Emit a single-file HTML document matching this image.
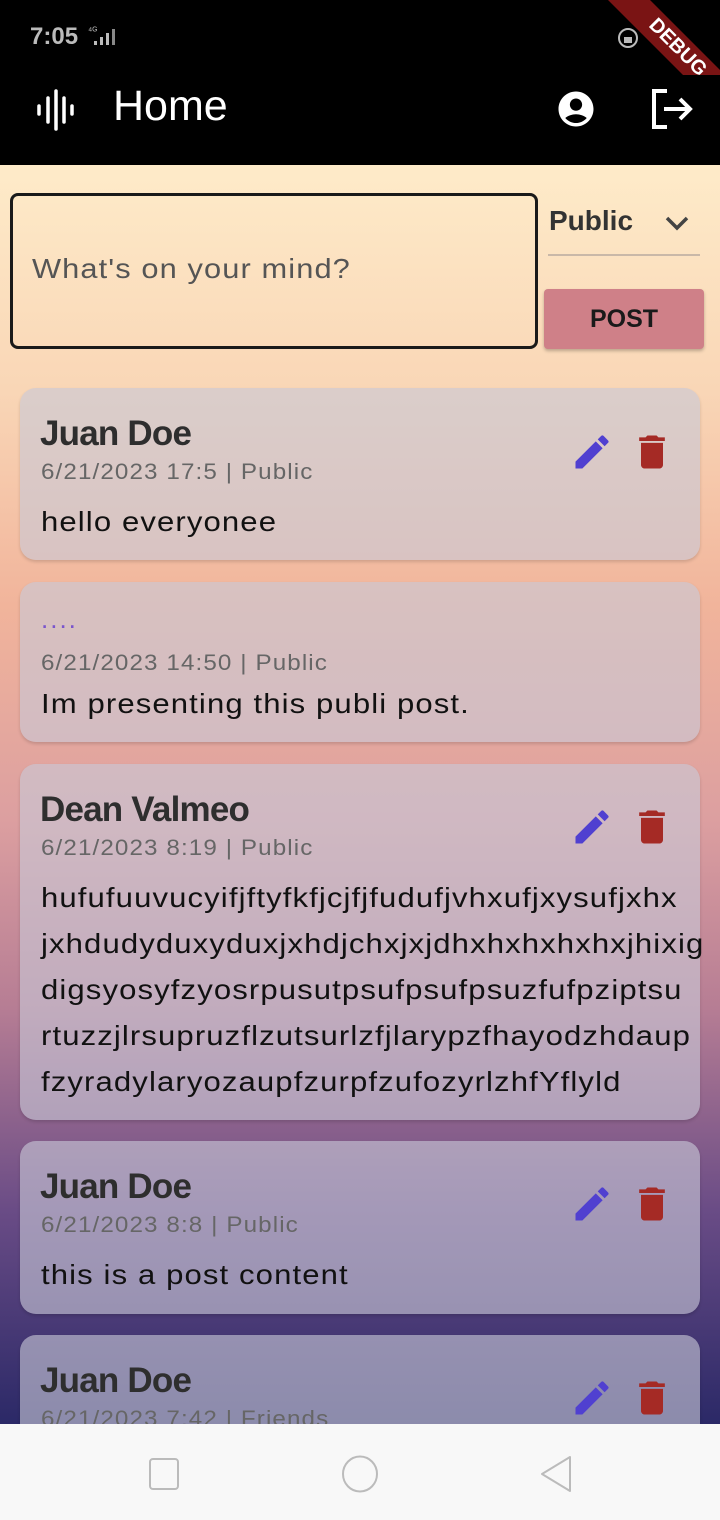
<!DOCTYPE html>
<html><head><meta charset="utf-8"><style>
*{margin:0;padding:0;box-sizing:border-box}
body{width:720px;height:1520px;overflow:hidden;font-family:"Liberation Sans",sans-serif;background:#000;position:relative}
.status{position:absolute;top:0;left:0;width:720px;height:75px;background:#000}
.appbar{position:absolute;top:75px;left:0;width:720px;height:90px;background:#000;color:#fff}
.content{position:absolute;top:165px;left:0;width:720px;height:1259px;overflow:hidden;
background:linear-gradient(180deg,#feebc9 0%,#f9d6b6 18%,#f1b49b 35%,#dc9fa0 52%,#b67d94 67%,#6a4c86 83%,#2b2967 100%)}
.nav{position:absolute;top:1424px;left:0;width:720px;height:96px;background:#f8f8f8}
.card{position:absolute;left:20px;width:680px;border-radius:16px;background:rgba(200,200,214,0.62);box-shadow:0 2px 3px rgba(0,0,0,0.15)}
.name{position:absolute;left:20px;font-weight:bold;font-size:35px;color:#2e2e2e;letter-spacing:-0.8px}
.meta{position:absolute;left:21px;font-size:22px;color:#666;letter-spacing:1px;transform:scaleX(1.1);transform-origin:0 0;white-space:nowrap}
.body{position:absolute;left:21px;font-size:28px;color:#111;line-height:46px;letter-spacing:1px;white-space:nowrap;transform:scaleX(1.11);transform-origin:0 0}
.ic{position:absolute}
</style></head><body>
<div class="status">
<div style="position:absolute;left:30px;top:23px;color:#bbb;font-size:24px;font-weight:bold">7:05</div>
<div style="position:absolute;left:88px;top:26px;color:#bbb;font-size:10px">⁴ᴳ</div>
<svg style="position:absolute;left:94px;top:28px" width="24" height="18"><rect x="0" y="13" width="3" height="4" fill="#bbb"/><rect x="6" y="9" width="3" height="8" fill="#bbb"/><rect x="12" y="5" width="3" height="12" fill="#bbb"/><rect x="18" y="1" width="3" height="16" fill="#888"/></svg>
<svg style="position:absolute;left:617px;top:27px" width="22" height="22"><circle cx="11" cy="11" r="9" fill="none" stroke="#bbb" stroke-width="2"/><rect x="7" y="10" width="8" height="6" fill="#bbb"/></svg>
<svg style="position:absolute;left:600px;top:0" width="120" height="120"><polygon points="8,0 50,0 120,70 120,112" fill="#7a1414"/><text x="0" y="0" transform="translate(48,26) rotate(45)" fill="#fff" font-family="Liberation Sans" font-weight="bold" font-size="20">DEBUG</text></svg>
</div>
<div class="appbar">
<svg class="ic" style="left:36px;top:14px" width="40" height="42"><g stroke="#fff" stroke-width="3.5" stroke-linecap="round"><line x1="3" y1="17" x2="3" y2="25"/><line x1="12" y1="9" x2="12" y2="33"/><line x1="20" y1="2" x2="20" y2="40"/><line x1="28" y1="9" x2="28" y2="33"/><line x1="36" y1="17" x2="36" y2="25"/></g></svg>
<div style="position:absolute;left:113px;top:7px;font-size:43px">Home</div>
<svg class="ic" style="left:555px;top:13px" width="42" height="42" viewBox="0 0 24 24"><path fill="#fff" d="M12 2C6.48 2 2 6.48 2 12s4.48 10 10 10 10-4.48 10-10S17.52 2 12 2zm0 4c1.93 0 3.5 1.57 3.5 3.5S13.93 13 12 13s-3.5-1.570-3.5-3.5S10.07 6 12 6zm0 14c-2.03 0-4.43-.82-6.14-2.88C7.55 15.8 9.68 15 12 15s4.45.8 6.14 2.12C16.43 19.18 14.03 20 12 20z"/></svg>
<svg class="ic" style="left:650px;top:13px" width="44" height="42"><g fill="none" stroke="#fff" stroke-width="4"><path d="M17 3H4V39H17"/><path d="M14 21H40M30 11L40 21L30 31"/></g></svg>
</div>
<div class="content">
<div style="position:absolute;left:10px;top:28px;width:528px;height:156px;border:3px solid #1a1a1a;border-radius:8px"></div>
<div style="position:absolute;left:32px;top:88px;font-size:28px;color:#555;letter-spacing:1px;transform:scaleX(1.1);transform-origin:0 0;white-space:nowrap">What's on your mind?</div>
<div style="position:absolute;left:549px;top:40px;font-size:28px;font-weight:bold;color:#333">Public</div>
<svg class="ic" style="left:664px;top:50px" width="26" height="16"><path d="M3 3L13 13L23 3" fill="none" stroke="#444" stroke-width="3.5"/></svg>
<div style="position:absolute;left:548px;top:89px;width:152px;height:2px;background:#c9b8a8"></div>
<div style="position:absolute;left:544px;top:124px;width:160px;height:60px;background:#cf8088;border-radius:4px;box-shadow:0 2px 3px rgba(0,0,0,0.25);color:#1a1a1a;font-weight:bold;font-size:25px;text-align:center;line-height:60px">POST</div>

<div class="card" style="top:223px;height:172px">
<div class="name" style="top:26px">Juan Doe</div>
<div class="meta" style="top:71px">6/21/2023 17:5 | Public</div>
<div class="body" style="top:111px">hello everyonee</div>
</div>
<div class="card" style="top:417px;height:160px">
<div style="position:absolute;left:21px;top:22px;font-size:26px;color:#7a55cc;letter-spacing:2px">....</div>
<div class="meta" style="top:68px">6/21/2023 14:50 | Public</div>
<div class="body" style="top:99px">Im presenting this publi post.</div>
</div>
<div class="card" style="top:599px;height:356px">
<div class="name" style="top:26px">Dean Valmeo</div>
<div class="meta" style="top:71px">6/21/2023 8:19 | Public</div>
<div class="body" style="top:111px">hufufuuvucyifjftyfkfjcjfjfudufjvhxufjxysufjxhx<br>jxhdudyduxyduxjxhdjchxjxjdhxhxhxhxhxjhixig<br>digsyosyfzyosrpusutpsufpsufpsuzfufpziptsu<br>rtuzzjlrsupruzflzutsurlzfjlarypzfhayodzhdaup<br>fzyradylaryozaupfzurpfzufozyrlzhfYflyld</div>
</div>
<div class="card" style="top:976px;height:173px">
<div class="name" style="top:26px">Juan Doe</div>
<div class="meta" style="top:71px">6/21/2023 8:8 | Public</div>
<div class="body" style="top:111px">this is a post content</div>
</div>
<div class="card" style="top:1170px;height:200px">
<div class="name" style="top:26px">Juan Doe</div>
<div class="meta" style="top:71px">6/21/2023 7:42 | Friends</div>
</div>
<svg width="0" height="0" style="position:absolute"><defs>
<g id="pen"><path fill="#5040d0" d="M3 17.25V21h3.75L17.81 9.94l-3.75-3.75L3 17.25zM20.71 7.04a1 1 0 000-1.41l-2.34-2.34a1 1 0 00-1.41 0l-1.83 1.83 3.75 3.75 1.83-1.83z"/></g>
<g id="bin"><path fill="#a52a25" d="M6 19c0 1.1.9 2 2 2h8c1.1 0 2-.9 2-2V7H6v12zM19 4h-3.5l-1-1h-5l-1 1H5v2h14V4z"/></g></defs></svg>
<svg class="ic" style="left:570px;top:265px" width="44" height="44" viewBox="0 0 24 24"><use href="#pen"/></svg>
<svg class="ic" style="left:630px;top:265px" width="44" height="44" viewBox="0 0 24 24"><use href="#bin"/></svg>
<svg class="ic" style="left:570px;top:640px" width="44" height="44" viewBox="0 0 24 24"><use href="#pen"/></svg>
<svg class="ic" style="left:630px;top:640px" width="44" height="44" viewBox="0 0 24 24"><use href="#bin"/></svg>
<svg class="ic" style="left:570px;top:1017px" width="44" height="44" viewBox="0 0 24 24"><use href="#pen"/></svg>
<svg class="ic" style="left:630px;top:1017px" width="44" height="44" viewBox="0 0 24 24"><use href="#bin"/></svg>
<svg class="ic" style="left:570px;top:1211px" width="44" height="44" viewBox="0 0 24 24"><use href="#pen"/></svg>
<svg class="ic" style="left:630px;top:1211px" width="44" height="44" viewBox="0 0 24 24"><use href="#bin"/></svg>
</div>
<div class="nav">
<svg class="ic" style="left:148px;top:33px" width="32" height="34"><rect x="2" y="2" width="28" height="30" rx="3" fill="none" stroke="#bbb" stroke-width="2"/></svg>
<svg class="ic" style="left:340px;top:30px" width="40" height="40"><ellipse cx="20" cy="20" rx="17" ry="17.5" fill="none" stroke="#bbb" stroke-width="2"/></svg>
<svg class="ic" style="left:538px;top:30px" width="36" height="40"><path d="M32 3L4 20L32 37Z" fill="none" stroke="#bbb" stroke-width="2" stroke-linejoin="round"/></svg>
</div>
</body></html>
